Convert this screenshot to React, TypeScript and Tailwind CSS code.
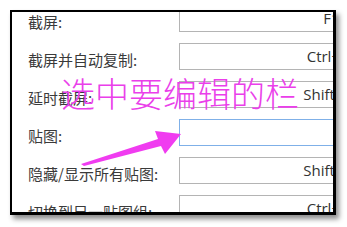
import React from 'react'

// ─── Data ─────────────────────────────────────────────────────

const rows = [
  { label: '截屏:', key: 'F1' },
  { label: '截屏并自动复制:', key: 'Ctrl+F1' },
  { label: '延时截屏:', key: 'Shift+F1' },
  { label: '贴图:', key: '', active: true },
  { label: '隐藏/显示所有贴图:', key: 'Shift+F3' },
  { label: '切换到另一贴图组:', key: 'Ctrl+F3' },
]

const cjk = { fontFamily: '"Noto Sans CJK SC", "Noto Sans", sans-serif' }

// ─── Row ──────────────────────────────────────────────────────

function HotkeyRow({ label, keyText, active }: { label: string; keyText: string; active?: boolean }) {
  return (
    <div className="flex h-[38px] shrink-0 items-start">
      <span className="mt-[7px] w-[167px] shrink-0 whitespace-nowrap pl-[16px] text-[15px] leading-[20px] text-[#3a3a3a]">
        {label}
      </span>
      <div
        className={
          'flex h-[27px] w-[305px] shrink-0 items-center justify-center bg-white text-[15px] text-[#333] ' +
          (active ? 'border border-[#7fb0e8]' : 'border border-[#b4b4b4]')
        }
        style={{ fontFamily: '"Open Sans", "Noto Sans", sans-serif' }}
      >
        {keyText}
      </div>
    </div>
  )
}

// ─── Page ─────────────────────────────────────────────────────

export default function App() {
  return (
    <div className="relative h-[227px] w-[347px] overflow-hidden bg-white" style={cjk}>
      <div className="pl-[10px] pt-[10px]">
        <div className="h-[205px] w-[326px] overflow-hidden border-2 border-r-[3px] border-b-[3px] border-black bg-white shadow-[3px_4px_5px_rgba(0,0,0,0.45)]">
          <div className="-mt-[7px] flex flex-col">
            {rows.map(r => (
              <HotkeyRow key={r.label} label={r.label} keyText={r.key} active={r.active} />
            ))}
          </div>
        </div>
      </div>

      {/* annotation */}
      <span className="absolute left-[61px] top-[72px] whitespace-nowrap text-[34px] font-light leading-[42px] text-[#ea3fea]">
        选中要编辑的栏
      </span>
      <svg className="absolute left-0 top-0" width="347" height="227" viewBox="0 0 347 227">
        <polygon
          points="81,164 158,139 155,131 181,134 165,154 161,146 84,166"
          fill="#f03cf0"
        />
      </svg>
    </div>
  )
}
